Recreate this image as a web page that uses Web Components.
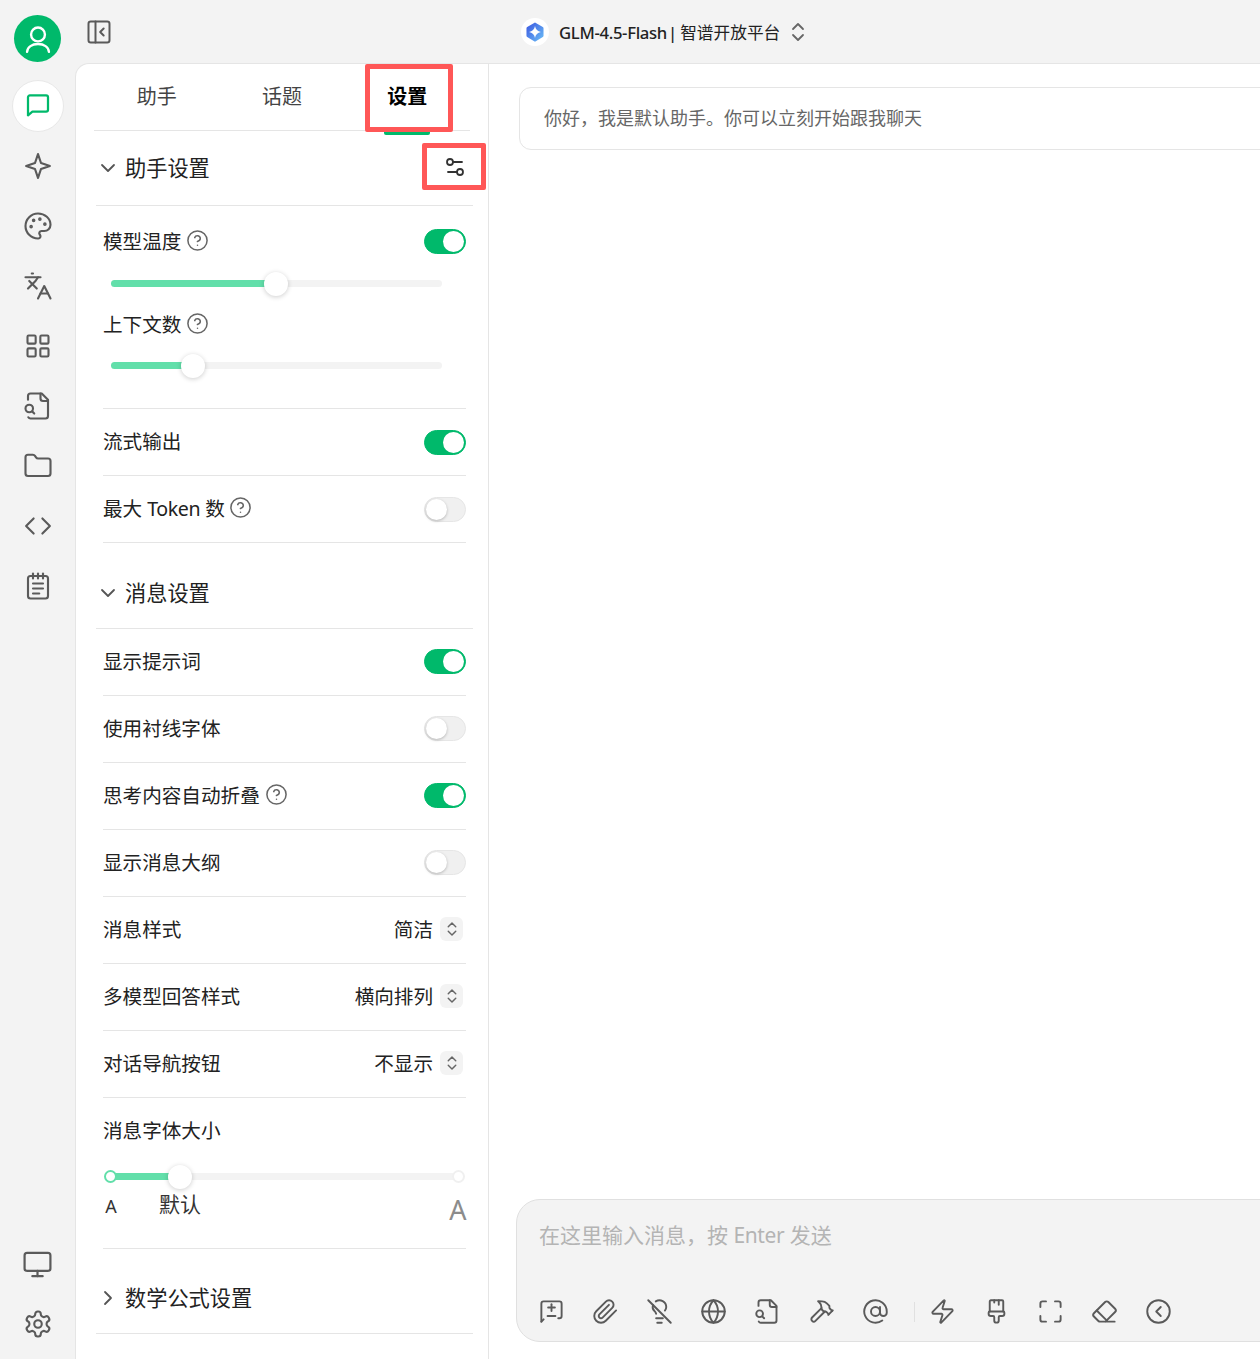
<!DOCTYPE html>
<html lang="zh-CN"><head><meta charset="utf-8"><title>GLM</title>
<style>
html,body{margin:0;padding:0;height:100%;overflow:hidden;background:#f3f3f3}
body{font-family:"Noto Sans","Noto Sans CJK SC",sans-serif;color:#222}
</style></head><body>
<app-shell></app-shell>
<script>
const P={
user:'<circle cx="12" cy="8.600" r="5.200"/><path d="M3.800 21.600c.4-3.600 3.600-5.800 8.200-5.800s7.800 2.200 8.200 5.800"/>',
chat:'<path d="M4 5a1.500 1.500 0 0 1 1.500-1.500h13A1.500 1.500 0 0 1 20 5v10a1.500 1.500 0 0 1-1.500 1.500H7.500L4 19.500z"/>',
star:'<path d="M12 2.500l2.400 7.100 7.100 2.400-7.100 2.400-2.400 7.100-2.400-7.100L2.500 12l7.100-2.400z"/>',
palette:'<path d="M12 22a1 1 0 0 1 0-20 10 9 0 0 1 10 9 5 5 0 0 1-5 5h-2.250a1.750 1.750 0 0 0-1.400 2.800l.3.4a1.750 1.750 0 0 1-1.400 2.800z"/><circle cx="13.500" cy="6.500" r=".6" fill="currentColor"/><circle cx="17.500" cy="10.500" r=".6" fill="currentColor"/><circle cx="6.500" cy="12.500" r=".6" fill="currentColor"/><circle cx="8.500" cy="7.500" r=".6" fill="currentColor"/>',
lang:'<path d="m5 8 6 6"/><path d="m4 14 6-6 2-3"/><path d="M2 5h12"/><path d="M7 2h1"/><path d="m22 22-5-10-5 10"/><path d="M14 18h6"/>',
grid:'<rect x="3" y="3" width="7" height="7" rx="1"/><rect x="14" y="3" width="7" height="7" rx="1"/><rect x="3" y="14" width="7" height="7" rx="1"/><rect x="14" y="14" width="7" height="7" rx="1"/>',
filesearch:'<path d="M14 2v4a2 2 0 0 0 2 2h4"/><path d="M4.268 21a2 2 0 0 0 1.727 1H18a2 2 0 0 0 2-2V7l-5-5H6a2 2 0 0 0-2 2v3"/><path d="m9 18-1.500-1.500"/><circle cx="5" cy="14" r="3"/>',
folder:'<path d="M20 20a2 2 0 0 0 2-2V8a2 2 0 0 0-2-2h-7.900a2 2 0 0 1-1.690-.9L9.600 3.900A2 2 0 0 0 7.930 3H4a2 2 0 0 0-2 2v13a2 2 0 0 0 2 2Z"/>',
code:'<path d="m15.500 6 6 6-6 6"/><path d="M8.500 6l-6 6 6 6"/>',
note:'<path d="M8 2v4"/><path d="M12 2v4"/><path d="M16 2v4"/><rect x="4" y="4" width="16" height="18" rx="2"/><path d="M8 10h8"/><path d="M8 14h8"/><path d="M8 18h5"/>',
monitor:'<rect x="2" y="3" width="20" height="14" rx="2"/><path d="M12 17v4"/><path d="M8 21h8"/>',
gear:'<path d="M12.220 2h-.44a2 2 0 0 0-2 2v.18a2 2 0 0 1-1 1.730l-.43.25a2 2 0 0 1-2 0l-.15-.08a2 2 0 0 0-2.730.73l-.22.38a2 2 0 0 0 .73 2.730l.15.1a2 2 0 0 1 1 1.720v.51a2 2 0 0 1-1 1.740l-.15.09a2 2 0 0 0-.73 2.730l.22.38a2 2 0 0 0 2.730.73l.15-.08a2 2 0 0 1 2 0l.43.25a2 2 0 0 1 1 1.730V20a2 2 0 0 0 2 2h.44a2 2 0 0 0 2-2v-.18a2 2 0 0 1 1-1.730l.43-.25a2 2 0 0 1 2 0l.15.08a2 2 0 0 0 2.730-.73l.22-.39a2 2 0 0 0-.73-2.730l-.15-.08a2 2 0 0 1-1-1.740v-.5a2 2 0 0 1 1-1.740l.15-.09a2 2 0 0 0 .73-2.730l-.22-.38a2 2 0 0 0-2.730-.73l-.15.08a2 2 0 0 1-2 0l-.43-.25a2 2 0 0 1-1-1.730V4a2 2 0 0 0-2-2z"/><circle cx="12" cy="12" r="3"/>',
panel:'<rect x="3" y="3" width="18" height="18" rx="2"/><path d="M9 3v18"/><path d="m16 15-3-3 3-3"/>',
updown:'<path d="m7 15 5 5 5-5"/><path d="m7 9 5-5 5 5"/>',
tune:'<path d="M14 17H5"/><path d="M19 7h-9"/><circle cx="17" cy="17" r="3"/><circle cx="7" cy="7" r="3"/>',
help:'<circle cx="12" cy="12" r="10"/><path d="M9.090 9a3 3 0 0 1 5.830 1c0 2-3 3-3 3"/><path d="M12 17h.01"/>',
down:'<path d="m6 9 6 6 6-6"/>',
right:'<path d="m9 18 6-6-6-6"/>',
addmsg:'<path d="M3 21V5a2 2 0 0 1 2-2h14a2 2 0 0 1 2 2v11a2 2 0 0 1-2 2h-1"/><path d="M3 21l2-2"/><path d="M12 5.500v6"/><path d="M9 8.500h6"/><path d="M8.500 16h7"/>',
clip:'<path d="m21.440 11.050-9.190 9.190a6 6 0 0 1-8.490-8.490l8.570-8.570A4 4 0 1 1 18 8.840l-8.590 8.570a2 2 0 0 1-2.830-2.830l8.490-8.480"/>',
bulboff:'<path d="M16.800 11.200c.8-.9 1.200-2 1.200-3.200a6 6 0 0 0-9.300-5"/><path d="m2 2 20 20"/><path d="M6.300 6.300a4.670 4.670 0 0 0 1.200 5.200c.7.7 1.300 1.500 1.500 2.500"/><path d="M9 18h6"/><path d="M10 22h4"/>',
globe:'<circle cx="12" cy="12" r="10"/><path d="M12 2a14.500 14.500 0 0 0 0 20 14.500 14.500 0 0 0 0-20"/><path d="M2 12h20"/>',
hammer:'<path d="m15 12-8.373 8.373a1 1 0 1 1-3-3L12 9"/><path d="m18 15 4-4"/><path d="m21.500 11.500-1.914-1.914A2 2 0 0 1 19 8.172V7l-2.260-2.260a6 6 0 0 0-4.202-1.756L9 2.960l.92.82A6.180 6.180 0 0 1 12 8.400V10l2 2h1.172a2 2 0 0 1 1.414.586L18.500 14.500"/>',
at:'<circle cx="12" cy="12" r="4"/><path d="M16 8v5a3 3 0 0 0 6 0v-1a10 10 0 1 0-4 8"/>',
zap:'<path d="M4 14a1 1 0 0 1-.78-1.630l9.900-10.200a.5.5 0 0 1 .86.46l-1.920 6.020A1 1 0 0 0 13 10h7a1 1 0 0 1 .78 1.630l-9.900 10.200a.5.5 0 0 1-.86-.46l1.920-6.020A1 1 0 0 0 11 14z"/>',
brush:'<path d="M10 2v2"/><path d="M14 2v4"/><path d="M17 2a1 1 0 0 1 1 1v9H6V3a1 1 0 0 1 1-1z"/><path d="M6 12a1 1 0 0 0-1 1v1a2 2 0 0 0 2 2h2a1 1 0 0 1 1 1v2.900a2 2 0 1 0 4 0V17a1 1 0 0 1 1-1h2a2 2 0 0 0 2-2v-1a1 1 0 0 0-1-1"/>',
max:'<path d="M8 3H5a2 2 0 0 0-2 2v3"/><path d="M21 8V5a2 2 0 0 0-2-2h-3"/><path d="M3 16v3a2 2 0 0 0 2 2h3"/><path d="M16 21h3a2 2 0 0 0 2-2v-3"/>',
eraser:'<path d="M21 21H8a2 2 0 0 1-1.420-.587l-3.994-3.999a2 2 0 0 1 0-2.828l10-10a2 2 0 0 1 2.829 0l5.999 6a2 2 0 0 1 0 2.828L12.834 21"/><path d="m5.082 11.090 8.828 8.828"/>',
back:'<circle cx="12" cy="12" r="10"/><path d="m14 16-4-4 4-4"/>'
};
function def(name,html,init){
  const t=document.createElement('template');t.innerHTML=html;
  customElements.define(name,class extends HTMLElement{
    constructor(){super();this.attachShadow({mode:'open'}).appendChild(t.content.cloneNode(true));}
    connectedCallback(){if(init)init(this,this.shadowRoot);}
  });
}
customElements.define('x-icon',class extends HTMLElement{
  constructor(){super();this.attachShadow({mode:'open'});}
  connectedCallback(){
    const s=this.getAttribute('size')||30,w=this.getAttribute('sw')||1.700;
    this.shadowRoot.innerHTML=`<style>:host{display:inline-flex;flex:none;width:${s}px;height:${s}px}svg{display:block;width:100%;height:100%}</style><svg viewBox="0 0 24 24" fill="none" stroke="currentColor" stroke-width="${w}" stroke-linecap="round" stroke-linejoin="round">${P[this.getAttribute('n')]||''}</svg>`;
  }
});
def('rail-item',`<style>
:host{display:flex;width:52px;height:52px;align-items:center;justify-content:center;box-sizing:border-box;border-radius:50%;color:#5a5a5a;flex:none}
:host([active]){background:#fff;border:1px solid #e8e8e8;color:#00b96b}
</style><slot></slot>`);
def('side-rail',`<style>
:host{display:flex;flex-direction:column;align-items:center;width:75px;flex:none;padding-top:15px;box-sizing:border-box;height:100%}
.av{width:47px;height:47px;border-radius:50%;background:#00b96b;color:#fff;display:flex;align-items:center;justify-content:center;margin-bottom:18px;flex:none}
.list{display:flex;flex-direction:column;gap:8px;align-items:center}
.bot{margin-top:auto;display:flex;flex-direction:column;gap:8px;padding-bottom:9px}
</style>
<div class="av"><x-icon n="user" size="32" sw="1.800"></x-icon></div>
<div class="list">
<rail-item active><x-icon n="chat" sw="1.800"></x-icon></rail-item>
<rail-item><x-icon n="star"></x-icon></rail-item>
<rail-item><x-icon n="palette"></x-icon></rail-item>
<rail-item><x-icon n="lang"></x-icon></rail-item>
<rail-item><x-icon n="grid" size="28" sw="1.800"></x-icon></rail-item>
<rail-item><x-icon n="filesearch"></x-icon></rail-item>
<rail-item><x-icon n="folder"></x-icon></rail-item>
<rail-item><x-icon n="code"></x-icon></rail-item>
<rail-item><x-icon n="note"></x-icon></rail-item>
</div>
<div class="bot">
<rail-item><x-icon n="monitor" size="31"></x-icon></rail-item>
<rail-item><x-icon n="gear" size="30"></x-icon></rail-item>
</div>`);
def('top-bar',`<style>
:host{display:flex;align-items:center;height:63px;flex:none;position:relative;box-sizing:border-box;padding-left:10px;color:#5a5a5a}
.model{position:absolute;left:446px;top:18px;display:flex;align-items:center;height:28px;color:#222;font-size:16.700px;font-weight:500;white-space:nowrap}
.logo{width:28px;height:28px;border-radius:50%;background:#fff;display:flex;align-items:center;justify-content:center;margin-right:10px}
.logo svg{width:22px;height:22px;display:block}
.model x-icon{color:#666;margin-left:6px}
.lat{letter-spacing:-.32px}
.sep{margin:0 3px 0 1px}
.cn{font-weight:400}
</style>
<x-icon n="panel" size="28" sw="1.700"></x-icon>
<div class="model"><span class="logo"><svg viewBox="0 0 24 24"><defs><linearGradient id="g" x1="0" y1="0" x2="1" y2="1"><stop offset="0" stop-color="#3a55e0"/><stop offset="1" stop-color="#6cc0f7"/></linearGradient></defs><path d="M12 1.500l8.500 5a1.500 1.500 0 0 1 .8 1.300v8.400a1.500 1.500 0 0 1-.8 1.300l-8.500 5-8.500-5a1.500 1.500 0 0 1-.8-1.300V7.800a1.500 1.500 0 0 1 .8-1.300z" fill="url(#g)"/><path d="M12 5.500c.5 3.500 3 6 6.500 6.500-3.500.5-6 3-6.500 6.500-.5-3.500-3-6-6.500-6.500 3.500-.5 6-3 6.500-6.500z" fill="#fff"/></svg></span><span class="lat">GLM-4.5-Flash</span><span class="sep">|</span><span class="cn">智谱开放平台</span><x-icon n="updown" size="24" sw="1.800"></x-icon></div>`);
def('tab-bar',`<style>
:host{display:flex;height:66px;width:376px;margin-left:18px;border-bottom:1px solid #e5e5e5;box-sizing:content-box;position:relative;flex:none}
.t{flex:1;display:flex;align-items:center;justify-content:center;font-size:20px;color:#444;padding-bottom:4px;box-sizing:border-box}
.on{color:#000;font-weight:700}
.bar{position:absolute;left:290px;bottom:-5px;width:46px;height:5px;background:#00b96b;border-radius:0 0 2px 2px}
.red{position:absolute;left:271px;top:0px;width:88px;height:68px;box-sizing:border-box;border:5.500px solid #ff5757;border-radius:2px}
</style><div class="t">助手</div><div class="t">话题</div><div class="t on">设置</div><div class="bar"></div><div class="red"></div>`);
def('sec-head',`<style>
:host{display:flex;align-items:center;box-sizing:border-box;border-bottom:1px solid #e5e5e5;font-size:21.200px;color:#222;position:relative;flex:none;height:75px}
:host([tall]){height:86px;padding-top:14px}
.ch{width:16px;height:20px;display:flex;align-items:center;justify-content:center;margin:0 9px 0 4px;color:#555}
.t{padding-bottom:3px}
</style><span class="ch"><slot name="i"></slot></span><span class="t"><slot></slot></span>`);
def('q-mark',`<style>:host{display:inline-flex;margin-left:5px;color:#666}</style><x-icon n="help" size="23" sw="1.600"></x-icon>`);
def('set-row',`<style>
:host{display:flex;align-items:center;justify-content:space-between;height:66px;box-sizing:content-box;border-bottom:1px solid #e5e5e5;font-size:19.600px;color:#222;margin:0 7px;flex:none}
:host([u]){height:64px;padding-bottom:2px}
:host([plain]){border-bottom:none}
.l{display:flex;align-items:center;white-space:nowrap;padding-bottom:4px}
:host([plain]) .l,:host([u]) .l{padding-bottom:2px}
.r{display:flex;align-items:center}
</style><div class="l"><slot></slot></div><div class="r"><slot name="r"></slot></div>`);
def('x-switch',`<style>
:host{display:block;width:42px;height:25px;border-radius:13px;background:#f0f0f0;position:relative;box-sizing:border-box;border:1px solid #e6e6e6}
:host([on]){background:#00b96b;border-color:#00b96b}
.k{position:absolute;top:1px;left:1px;width:21px;height:21px;border-radius:50%;background:#fff;box-shadow:0 1px 3px rgba(0,0,0,.25)}
:host([on]) .k{left:18px;box-shadow:none}
</style><div class="k"></div>`);
def('x-select',`<style>
:host{display:flex;align-items:center;gap:7px;margin-right:3px}
.v{padding-bottom:2px}
.b{width:23px;height:24px;border-radius:6px;background:#f3f3f3;display:flex;align-items:center;justify-content:center;color:#666}
</style><span class="v"><slot></slot></span><span class="b"><x-icon n="updown" size="18" sw="1.900"></x-icon></span>`);
def('x-slider',`<style>
:host{display:block;height:7px;margin:0 31px 0 15px;background:#f3f3f3;border-radius:4px;position:relative;flex:none}
.f{height:100%;background:#62dfaa;border-radius:4px}
.h{position:absolute;top:50%;width:24px;height:24px;margin:-12px 0 0 -12px;border-radius:50%;background:#fff;box-shadow:0 1px 5px rgba(0,0,0,.2)}
.d{position:absolute;top:50%;width:9px;height:9px;margin:-6.500px 0 0 -6.500px;border-radius:50%;background:#fff;border:2px solid #f0f0f0;display:none}
:host([dots]) .d{display:block}
.d.a{left:0;border-color:#62dfaa}.d.z{left:100%}
</style><div class="f"></div><div class="d a"></div><div class="d z"></div><div class="h"></div>`,(el,s)=>{
  const v=el.getAttribute('v');s.querySelector('.f').style.width=v+'%';s.querySelector('.h').style.left=v+'%';
});
def('font-marks',`<style>
:host{display:block;position:relative;height:40px;margin:0 15px;flex:none;color:#333}
span{position:absolute;transform:translateX(-50%);line-height:1;white-space:nowrap}
.a{left:0;top:17px;font-size:18px;color:#333}
.b{left:69px;top:14px;font-size:21px;color:#333}
.c{left:347px;top:16px;font-size:27px;color:#8c8c8c}
</style><span class="a">A</span><span class="b">默认</span><span class="c">A</span>`);
def('settings-panel',`<style>
:host{display:flex;flex-direction:column;width:414px;flex:none;box-sizing:border-box;background:#fff;border-left:1px solid #e5e5e5;border-right:1px solid #e5e5e5;border-top:1px solid #e5e5e5;border-top-left-radius:14px;overflow:hidden;height:100%}
.c{margin-left:20px;width:377px;display:flex;flex-direction:column;flex:none;position:relative}
.red2{position:absolute;left:326px;top:12px;width:64px;height:47px;box-sizing:border-box;border:5.500px solid #ff5757;border-radius:2px;display:flex;align-items:center;justify-content:center;color:#333;background:#fff;padding-left:2px}
.sub{display:block;height:1px;background:#e5e5e5;margin:0 7px;flex:none}
.lab{display:flex;align-items:center;margin:0 7px;font-size:19.600px;color:#222;flex:none;box-sizing:border-box}
.lab2{height:40px;margin-top:16px;padding-bottom:0}
.fs{height:64px;padding-bottom:2px}
.tok{letter-spacing:-.45px}
</style>
<tab-bar></tab-bar>
<div class="c">
<sec-head><x-icon slot="i" n="down" size="24" sw="1.800"></x-icon>助手设置</sec-head>
<div class="red2"><x-icon n="tune" size="24" sw="1.800"></x-icon></div>
<set-row plain style="height:71px">模型温度<q-mark></q-mark><x-switch slot="r" on></x-switch></set-row>
<x-slider v="49.700" style="margin-top:3px"></x-slider>
<div class="lab lab2">上下文数<q-mark></q-mark></div>
<x-slider v="24.800" style="margin-top:19px"></x-slider>
<div style="height:39px;flex:none"></div>
<div class="sub"></div>
<set-row>流式输出<x-switch slot="r" on></x-switch></set-row>
<set-row><span>最大 <span class="tok">Token</span> 数</span><q-mark style="margin-left:4px"></q-mark><x-switch slot="r"></x-switch></set-row>
<sec-head tall><x-icon slot="i" n="down" size="24" sw="1.800"></x-icon>消息设置</sec-head>
<set-row u>显示提示词<x-switch slot="r" on></x-switch></set-row>
<set-row u>使用衬线字体<x-switch slot="r"></x-switch></set-row>
<set-row u>思考内容自动折叠<q-mark></q-mark><x-switch slot="r" on></x-switch></set-row>
<set-row u>显示消息大纲<x-switch slot="r"></x-switch></set-row>
<set-row u>消息样式<x-select slot="r">简洁</x-select></set-row>
<set-row u>多模型回答样式<x-select slot="r">横向排列</x-select></set-row>
<set-row u>对话导航按钮<x-select slot="r">不显示</x-select></set-row>
<div class="lab fs">消息字体大小</div>
<x-slider dots v="20" style="margin:11px 15px 0 14px"></x-slider>
<font-marks></font-marks>
<div style="height:28px;flex:none"></div>
<div class="sub"></div>
<sec-head tall style="height:85px"><x-icon slot="i" n="right" size="24" sw="1.800"></x-icon>数学公式设置</sec-head>
</div>`);
def('chat-input',`<style>
:host{display:flex;flex-direction:column;height:143px;margin-left:27px;width:800px;box-sizing:border-box;background:#f3f3f3;border:1px solid #e0e0e0;border-radius:24px;padding:19px 22px 0;flex:none}
.ph{font-size:21px;color:#b4b4b4;line-height:32px}
.ph span{letter-spacing:-.4px}
.tools{display:flex;align-items:center;gap:27px;margin-top:47px;color:#5a5a5a;margin-left:-1px}
.sep{width:1px;height:20px;background:#e0e0e0;margin:0 -12.500px 0 -2.500px}
</style>
<div class="ph">在这里输入消息，按 <span>Enter</span> 发送</div>
<div class="tools">
<x-icon n="addmsg" size="27"></x-icon><x-icon n="clip" size="27"></x-icon><x-icon n="bulboff" size="27"></x-icon><x-icon n="globe" size="27"></x-icon><x-icon n="filesearch" size="27"></x-icon><x-icon n="hammer" size="27"></x-icon><x-icon n="at" size="27"></x-icon><span class="sep"></span><x-icon n="zap" size="27"></x-icon><x-icon n="brush" size="27"></x-icon><x-icon n="max" size="27"></x-icon><x-icon n="eraser" size="27"></x-icon><x-icon n="back" size="27"></x-icon>
</div>`);
def('chat-view',`<style>
:host{display:flex;flex-direction:column;justify-content:space-between;flex:1;min-width:0;background:#fff;border-top:1px solid #e5e5e5;overflow:hidden;height:100%;box-sizing:border-box;padding:23px 0 17px}
.m{margin-left:30px;width:800px;height:63px;box-sizing:border-box;border:1px solid #e5e5e5;border-radius:12px;display:flex;align-items:center;padding:0 0 3px 24px;font-size:18px;color:#666;flex:none}
</style><div class="m">你好，我是默认助手。你可以立刻开始跟我聊天</div><chat-input></chat-input>`);
def('app-shell',`<style>
:host{display:flex;width:100%;height:100vh;overflow:hidden;background:#f3f3f3}
.main{flex:1;min-width:0;display:flex;flex-direction:column;height:100%}
.body{flex:1;min-height:0;display:flex}
</style><side-rail></side-rail><div class="main"><top-bar></top-bar><div class="body"><settings-panel></settings-panel><chat-view></chat-view></div></div>`);
</script>
</body></html>
